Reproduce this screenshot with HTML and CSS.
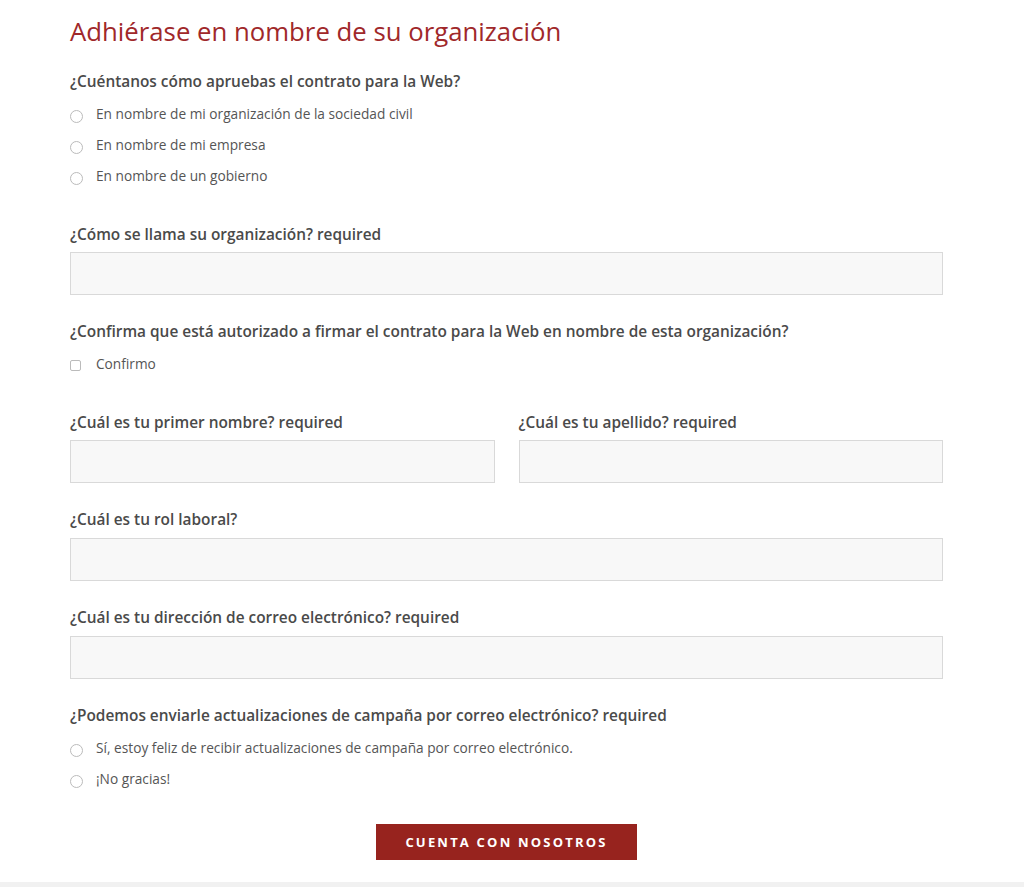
FILE: index.html
```html
<!DOCTYPE html>
<html>
<head>
  <title>Adhiérase en nombre de su organización</title>
  <meta charset="UTF-8">
  <link rel="stylesheet" href="styles.css">
</head>
<body>

<div class="page">
  <h1 class="title">Adhiérase en nombre de su organización</h1>

  <form class="join-form">
    <div class="field field-options">
      <p class="question">¿Cuéntanos cómo apruebas el contrato para la Web?</p>
      <label class="option"><input type="radio" name="tipo"> En nombre de mi organización de la sociedad civil</label>
      <label class="option"><input type="radio" name="tipo"> En nombre de mi empresa</label>
      <label class="option"><input type="radio" name="tipo"> En nombre de un gobierno</label>
    </div>

    <div class="field tight">
      <label class="question" for="org">¿Cómo se llama su organización? required</label>
      <input type="text" id="org" class="text-input">
    </div>

    <div class="field field-options">
      <p class="question">¿Confirma que está autorizado a firmar el contrato para la Web en nombre de esta organización?</p>
      <label class="option"><input type="checkbox" class="check"> Confirmo</label>
    </div>

    <div class="field row tight">
      <div class="col">
        <label class="question" for="nombre">¿Cuál es tu primer nombre? required</label>
        <input type="text" id="nombre" class="text-input">
      </div>
      <div class="col">
        <label class="question" for="apellido">¿Cuál es tu apellido? required</label>
        <input type="text" id="apellido" class="text-input">
      </div>
    </div>

    <div class="field">
      <label class="question" for="rol">¿Cuál es tu rol laboral?</label>
      <input type="text" id="rol" class="text-input">
    </div>

    <div class="field">
      <label class="question" for="correo">¿Cuál es tu dirección de correo electrónico? required</label>
      <input type="email" id="correo" class="text-input">
    </div>

    <div class="field field-options last">
      <p class="question">¿Podemos enviarle actualizaciones de campaña por correo electrónico? required</p>
      <label class="option"><input type="radio" name="news"> Sí, estoy feliz de recibir actualizaciones de campaña por correo electrónico.</label>
      <label class="option"><input type="radio" name="news"> ¡No gracias!</label>
    </div>

    <div class="center">
      <button type="submit" class="btn">Cuenta con nosotros</button>
    </div>
  </form>
</div>

<div class="footer"></div>

</body>
</html>
```

FILE: styles.css
```css
body {
  margin: 0;
  background-color: white;
  font-family: "Open Sans", "Liberation Sans", sans-serif;
  color: #444;
}

.page {
  width: 873px;
  margin-left: 70px;
  padding-top: 13px;
}

.title {
  margin: 0 0 23px 0;
  font-size: 25.75px;
  font-weight: 400;
  line-height: 36px;
  color: #a0282a;
}

.join-form {
  display: flex;
  flex-direction: column;
}

.field {
  display: flex;
  flex-direction: column;
  margin-bottom: 27px;
}

.field-options {
  margin-bottom: 34px;
}

.field-options.last {
  margin-bottom: 30px;
}

.question {
  display: block;
  margin: 0 0 8px 0;
  font-size: 15.4px;
  font-weight: 600;
  line-height: 20px;
  color: #4a4a4a;
}

.tight .question {
  margin-bottom: 7px;
}

.field-options .question {
  margin-bottom: 6px;
}

.option {
  display: flex;
  align-items: center;
  gap: 13px;
  height: 31px;
  font-size: 13.7px;
  color: #555;
}

.option input {
  appearance: none;
  -webkit-appearance: none;
  width: 13px;
  height: 13px;
  margin: 6px 0 0 0;
  border: 1px solid #bbb;
  border-radius: 50%;
  background: white;
  flex-shrink: 0;
}

.option input.check {
  width: 11px;
  height: 11px;
  margin: 4px 2px 0 0;
  border-radius: 2px;
}

.text-input {
  height: 43px;
  box-sizing: border-box;
  border: 1px solid #d9d9d9;
  background-color: #f8f8f8;
  font-family: inherit;
  font-size: 14px;
  padding: 0 10px;
}

.row {
  flex-direction: row;
  gap: 24px;
}

.col {
  flex: 1;
  display: flex;
  flex-direction: column;
}

.center {
  display: flex;
  justify-content: center;
}

.btn {
  width: 261px;
  height: 36px;
  border: none;
  background-color: #97231e;
  color: white;
  font-family: "Open Sans", "Liberation Sans", sans-serif;
  font-size: 13px;
  font-weight: 700;
  letter-spacing: 2.2px;
  text-transform: uppercase;
  cursor: pointer;
}

.footer {
  margin-top: 22px;
  height: 10px;
  background-color: #f1f1f1;
}
```
